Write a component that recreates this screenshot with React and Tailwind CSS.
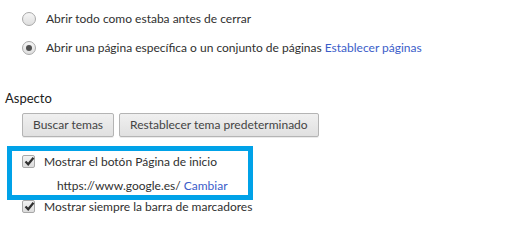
import React from "react";

function Radio({ checked }) {
  return (
    <span className="relative inline-block w-[14px] h-[14px] rounded-full border border-[#a8a8a8] bg-gradient-to-b from-[#f6f6f6] to-[#dedede] shrink-0">
      {checked && (
        <span className="absolute left-[3px] top-[3px] w-[6px] h-[6px] rounded-full bg-[#505050]" />
      )}
    </span>
  );
}

function Check() {
  return (
    <span className="relative inline-block w-[13px] h-[13px] rounded-[2px] border border-[#a8a8a8] bg-gradient-to-b from-[#f2f2f2] to-[#dcdcdc] shrink-0">
      <svg className="absolute left-[1px] top-[0px]" width="11" height="11" viewBox="0 0 11 11">
        <path d="M1.5 5.5 L4.2 8.3 L9.5 1.8" fill="none" stroke="#303030" strokeWidth="2.2" />
      </svg>
    </span>
  );
}

export default function App() {
  return (
    <div
      className="w-[507px] h-[242px] bg-white text-[#303030] text-[12px] leading-none overflow-hidden"
      style={{ fontFamily: 'Lato, "Open Sans", sans-serif' }}
    >
      <div className="pl-[22px] pt-[12px] flex flex-col gap-[15px]">
        <div className="flex items-center gap-[10px] h-[14px]">
          <Radio />
          <span>Abrir todo como estaba antes de cerrar</span>
        </div>
        <div className="flex items-center gap-[10px] h-[14px]">
          <Radio checked />
          <span>
            Abrir una página específica o un conjunto de páginas{" "}
            <span className="text-[#3b5dc9]">Establecer páginas</span>
          </span>
        </div>
      </div>
      <div className="pl-[5px] mt-[37px] text-[13px] text-[#202020]">Aspecto</div>
      <div className="pl-[22px] mt-[8px] flex gap-[5px]">
        <button className="h-[24px] px-[10px] rounded-[2px] border border-[#b4b4b4] bg-gradient-to-b from-[#f0f0f0] to-[#e0e0e0] text-[#444] shadow-[0_1px_0_rgba(0,0,0,0.08)]">
          Buscar temas
        </button>
        <button className="h-[24px] px-[10px] rounded-[2px] border border-[#b4b4b4] bg-gradient-to-b from-[#f0f0f0] to-[#e0e0e0] text-[#444] shadow-[0_1px_0_rgba(0,0,0,0.08)]">
          Restablecer tema predeterminado
        </button>
      </div>
      <div className="ml-[7px] mt-[9px] w-[246px] h-[54px] border-[5px] border-[#00a2e8] pl-[10px] pt-[4px]">
        <div className="flex items-center gap-[9px] h-[13px]">
          <Check />
          <span>Mostrar el botón Página de inicio</span>
        </div>
        <div className="pl-[35px] mt-[11px] h-[13px] flex items-center">
          https://www.google.es/&nbsp;<span className="text-[#3b5dc9]">Cambiar</span>
        </div>
      </div>
      <div className="pl-[22px] mt-[0px] flex items-center gap-[9px] h-[13px]">
        <Check />
        <span>Mostrar siempre la barra de marcadores</span>
      </div>
    </div>
  );
}
